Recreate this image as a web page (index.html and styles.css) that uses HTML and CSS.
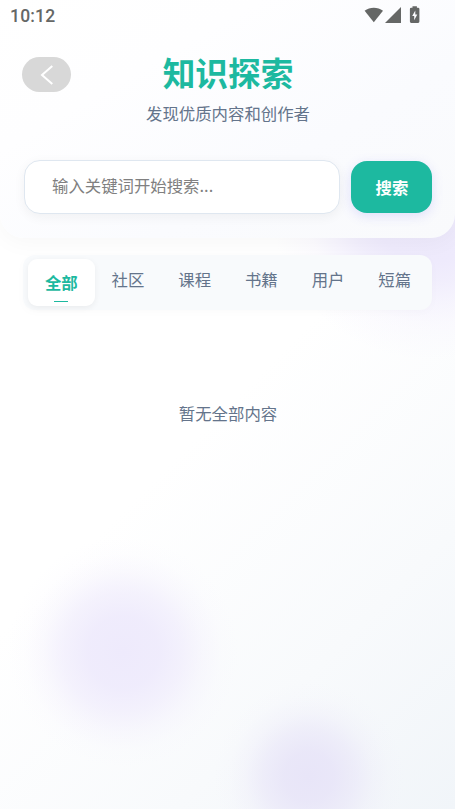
FILE: index.html
```html
<!DOCTYPE html>
<html lang="zh-CN">
<head>
<meta charset="utf-8">
<title>知识探索</title>
<link rel="stylesheet" href="styles.css">
</head>
<body>
<header class="header">
  <div class="status">
    <span class="time">10:12</span>
    <svg class="status-icons" width="58" height="18" viewBox="0 0 58 18" fill="#656766">
      <path d="M0.6 4.8C5.8.8 13.8.8 19 4.8L9.8 16.2Z"/>
      <path d="M37 1V17H21Z"/>
      <path fill-rule="evenodd" d="M48.5 0.3h4.4v1.5h1.2q1.3 0 1.3 1.3v12.4q0 1.4-1.3 1.4h-6.9q-1.3 0-1.3-1.4V3.1q0-1.3 1.3-1.3h1.3ZM51.3 4.6L48.2 10h2v4.2L53.3 8.600h-2Z"/>
    </svg>
  </div>
  <div class="heading">
    <button class="back" aria-label="返回">
      <svg width="14" height="22" viewBox="0 0 14 22" fill="none" stroke="#fff" stroke-width="2"><path d="M12.300 2L2 11l10.300 9"/></svg>
    </button>
    <h1>知识探索</h1>
    <p>发现优质内容和创作者</p>
  </div>
  <div class="search">
    <input class="field" type="text" placeholder="输入关键词开始搜索...">
    <button class="submit">搜索</button>
  </div>
</header>
<nav class="tabs">
  <a class="tab active">全部</a>
  <a class="tab">社区</a>
  <a class="tab">课程</a>
  <a class="tab">书籍</a>
  <a class="tab">用户</a>
  <a class="tab">短篇</a>
</nav>
<main class="empty">暂无全部内容</main>
</body>
</html>
```
FILE: styles.css
```css
* { box-sizing: border-box; }
body {
  margin: 0;
  height: 809px;
  overflow: hidden;
  background:
    radial-gradient(circle at 430px 200px, #ece8fb 0, #eeeafc 62px, rgba(238, 234, 252, .8) 82px, rgba(240, 236, 253, .55) 102px, rgba(242, 238, 253, .25) 124px, rgba(244, 240, 254, 0) 160px),
    radial-gradient(circle at 123px 652px, #eeeafc 0, rgba(238, 234, 252, .9) 36px, rgba(239, 235, 252, .65) 60px, rgba(240, 236, 252, .3) 80px, rgba(242, 238, 253, .08) 98px, rgba(244, 240, 254, 0) 115px),
    radial-gradient(circle at 309px 777px, #e8e5f8 0, rgba(232, 229, 248, .9) 25px, rgba(232, 229, 248, .6) 46px, rgba(233, 230, 248, .26) 64px, rgba(235, 232, 249, .07) 80px, rgba(236, 234, 250, 0) 95px),
    linear-gradient(135deg, #fff 0%, #fff 50%, #f8fafc 78%, #f1f5f9 100%);
  font-family: "Noto Sans CJK SC", sans-serif;
  font-size: 16.4px;
  color: #64748b;
}
button, input { font: inherit; border: 0; padding: 0; margin: 0; }
.header {
  height: 238px;
  padding: 0 23px 0 24px;
  border-radius: 0 0 24px 24px;
  background: linear-gradient(150deg, #fff 0%, #fefeff 30%, #fafbfe 65%, #f9fafc 100%);
  box-shadow: 0 4px 24px rgba(0, 0, 0, .035);
}
.status {
  display: flex;
  justify-content: space-between;
  height: 49px;
  margin-left: -14px;
  padding: 6px 10px 0 0;
}
.time {
  font: 500 17.5px/20px Roboto, sans-serif;
  color: #656766;
  letter-spacing: .2px;
}
.heading {
  position: relative;
  height: 111px;
  text-align: center;
}
.back {
  position: absolute;
  left: -2px;
  top: 8px;
  width: 49px;
  height: 35px;
  border-radius: 18px;
  background: #d8d8d8;
  display: flex;
  align-items: center;
  justify-content: center;
}
h1 {
  margin: 0;
  font-size: 32.7px;
  line-height: 46px;
  font-weight: 700;
  color: #1db9a0;
}
.heading p { margin: 6px 0 0; line-height: 24px; }
.search { display: flex; gap: 11px; }
.field {
  width: 316px;
  height: 54px;
  padding: 0 27px 4px;
  border: 1.5px solid #dfe7f0;
  border-radius: 16px;
  background: #fff;
  box-shadow: 0 3px 12px rgba(0, 0, 0, .05);
}
.field::placeholder { color: #808080; opacity: 1; }
.submit {
  width: 81px;
  height: 52px;
  margin-top: 1px;
  padding: 0 0 1px 1px;
  border-radius: 16px;
  background: #1db9a0;
  color: #fff;
  font-weight: 700;
  box-shadow: 0 3px 12px rgba(99, 102, 241, .18);
}
.tabs {
  display: flex;
  height: 55px;
  margin: 17px 23px 0;
  padding: 4px 4px 4px 5px;
  border-radius: 12px;
  background: #f8fafc;
  box-shadow: 0 2px 10px rgba(0, 0, 0, .02);
}
.tab {
  flex: 1;
  height: 47px;
  line-height: 41px;
  text-align: center;
}
.active {
  display: flex;
  flex-direction: column;
  align-items: center;
  border-radius: 9px;
  background: #fff;
  color: #1db9a0;
  font-weight: 700;
  line-height: 47px;
  box-shadow: 0 2px 6px rgba(0, 0, 0, .06);
}
.active::after {
  content: "";
  width: 14px;
  height: 1px;
  margin-top: -5px;
  background: #1db9a0;
}
.empty {
  margin: 91px 0 0 1px;
  line-height: 24px;
  text-align: center;
}
```
